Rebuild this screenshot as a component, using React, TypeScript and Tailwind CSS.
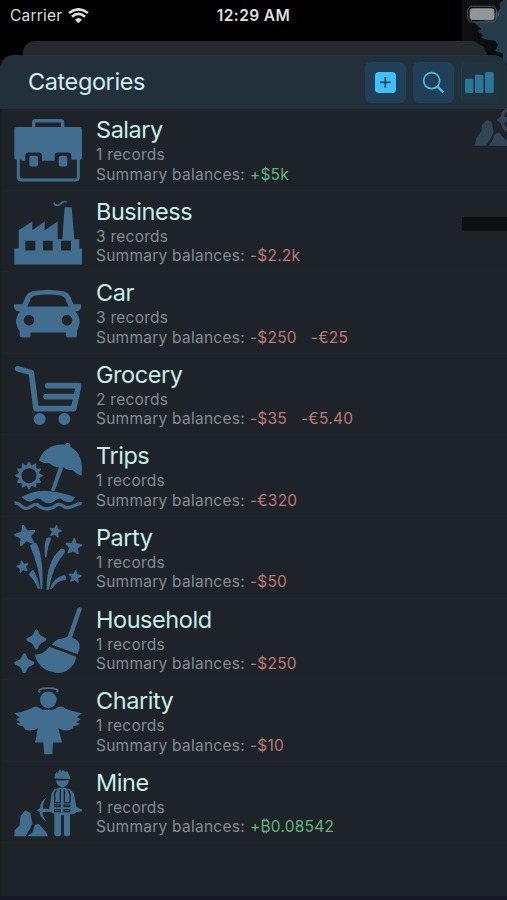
import type { ReactNode } from "react";

type Balance = { label: string; positive?: boolean };

type Category = {
    name: string;
    records: number;
    balances: Balance[];
    viewBox: string;
    icon: ReactNode;
};

const star = "M0 -31Q3 -31 4 -27L9 -13L25 -12Q33 -10 28 -5L15 5L20 21Q21 28 14 25L0 16L-14 25Q-21 28 -20 21L-15 5L-28 -5Q-33 -10 -25 -12L-9 -13L-4 -27Q-3 -31 0 -31Z";
const sparkle = "M0 -30Q4 -30 6 -24Q9 -12 20 -8L28 -4Q33 0 28 4L20 8Q9 12 6 24Q4 30 0 30Q-4 30 -6 24Q-9 12 -20 8L-28 4Q-33 0 -28 -4L-20 -8Q-9 -12 -6 -24Q-4 -30 0 -30Z";

const sunRays = Array.from({ length: 12 }, (_, i) => i * 30);

const categories: Category[] = [
    {
        name: "Salary",
        records: 1,
        balances: [{ label: "+$5k", positive: true }],
        viewBox: "0 1.8 252 244.8",
        icon: (
            <>
                <path d="M101 60V43Q101 37 107 37H182Q188 37 188 43V60" fill="none" stroke="currentColor" strokeWidth="10" />
                <path d="M51 56H239Q246 56 246 63V147Q246 154 239 154H214V142Q214 132 204 132H174Q164 132 164 142V157H126V142Q126 132 116 132H86Q76 132 76 142V157H65V154H51Q43 154 43 147V63Q43 56 51 56Z" />
                <path d="M55 151V206Q55 215 64 215H226Q235 215 235 206V151" fill="none" stroke="currentColor" strokeWidth="9" />
                <rect x="88" y="142" width="26" height="32" rx="6" />
                <rect x="176" y="142" width="26" height="32" rx="6" />
            </>
        ),
    },
    {
        name: "Business",
        records: 3,
        balances: [{ label: "-$2.2k" }],
        viewBox: "0 0.6 252 244.8",
        icon: (
            <>
                <path fillRule="evenodd" d="M43 172H56V118L97 92V118L134 92V118L173 92V145H187L194 49H215L223 145H238V172H246V221H43ZM76 150V179H106V150ZM129 150V179H158V150ZM183 150V179H213V150Z" />
                <path d="M161 36Q169 49 179 41Q190 28 200 34" fill="none" stroke="currentColor" strokeWidth="5" />
            </>
        ),
    },
    {
        name: "Car",
        records: 3,
        balances: [{ label: "-$250" }, { label: "-€25" }],
        viewBox: "0 5.4 252 244.8",
        icon: (
            <path fillRule="evenodd" d="M42 102H67L77 79Q83 67 98 63Q144 54 190 63Q205 67 211 79L220 102H243V109Q243 122 231 123L226 124Q240 140 239 158L231 184V195Q231 202 224 202H206Q198 202 198 195V187H92V195Q92 202 84 202H66Q59 202 59 195V184Q50 171 48 158Q47 140 60 124L55 123Q42 121 42 109ZM82 109H206L195 84Q192 79 185 77Q144 69 103 77Q96 79 93 84ZM87 134A16 16 0 1 0 87 166A16 16 0 1 0 87 134ZM201 134A16 16 0 1 0 201 166A16 16 0 1 0 201 134Z" />
        ),
    },
    {
        name: "Grocery",
        records: 2,
        balances: [{ label: "-$35" }, { label: "-€5.40" }],
        viewBox: "0 4.2 252 244.8",
        icon: (
            <>
                <path d="M53 48L94 60L108 168H221L236 99H143M138 132H224" fill="none" stroke="currentColor" strokeWidth="17" strokeLinecap="round" strokeLinejoin="round" />
                <circle cx="119" cy="199" r="18" />
                <circle cx="193" cy="199" r="18" />
            </>
        ),
    },
    {
        name: "Trips",
        records: 1,
        balances: [{ label: "-€320" }],
        viewBox: "0 3 252 244.8",
        icon: (
            <>
                <path d="M117 80C125 48 159 28 194 32L200 26Q209 25 211 33L211 39C239 53 251 84 244 125Q229 120 216 107Q201 111 191 98L164 170Q158 175 153 168L177 99Q161 101 149 88Q132 89 117 80Z" />
                <path d="M64 189Q94 171 134 170Q180 172 226 190L216 202Q202 209 188 198Q177 189 164 201Q146 215 128 201Q115 188 102 198Q90 207 77 199Z" />
                <path d="M44 207C60 205 62 222 77 223C93 224 98 207 112 212C126 225 142 229 160 220C175 207 181 210 194 219C212 229 226 207 245 209" fill="none" stroke="currentColor" strokeWidth="10" />
                <circle cx="87" cy="125" r="27" fill="none" stroke="currentColor" strokeWidth="9" />
                {sunRays.map((angle) => (
                    <path key={angle} d="M-9 -28L-2 -40Q0 -43 2 -40L9 -28Z" transform={`translate(87 125) rotate(${angle})`} />
                ))}
            </>
        ),
    },
    {
        name: "Party",
        records: 1,
        balances: [{ label: "-$50" }],
        viewBox: "0 1.8 252 244.8",
        icon: (
            <>
                <path d={star} transform="translate(76 58) rotate(-12) scale(1.08)" />
                <path d={star} transform="translate(166 45) rotate(12) scale(.64)" />
                <path d={star} transform="translate(221 91) rotate(5) scale(.84)" />
                <path d={star} transform="translate(68 151) rotate(-12) scale(.62)" />
                <path d={star} transform="translate(225 181) rotate(7) scale(.66)" />
                <path d="M91 86L104 78Q110 79 114 91Q131 134 127 217L122 219Q119 154 91 91Z" />
                <path d="M140 65Q150 59 154 66Q142 92 140 122L135 123Q131 82 140 65Z" />
                <path d="M184 96Q197 98 195 108Q156 151 147 219L140 221Q138 134 184 96Z" />
                <path d="M88 170L99 160Q113 179 120 216L114 217Q107 195 88 177Z" />
                <path d="M193 176Q203 183 196 191Q170 193 156 218L150 217Q160 184 193 176Z" />
            </>
        ),
    },
    {
        name: "Household",
        records: 1,
        balances: [{ label: "-$250" }],
        viewBox: "0 0.6 252 244.8",
        icon: (
            <>
                <path d="M232 29L239 25L246 29L216 117Q241 124 239 145L233 166L156 138Q168 120 185 120L203 114Z" />
                <path d="M148 144L229 174Q225 198 207 210Q184 230 158 219Q138 216 124 202Q109 189 105 168Q131 168 148 144Z" />
                <path d={sparkle} transform="translate(109 122)" />
                <path d={sparkle} transform="translate(73 193)" />
            </>
        ),
    },
    {
        name: "Charity",
        records: 1,
        balances: [{ label: "-$10" }],
        viewBox: "0 -0.6 252 244.8",
        icon: (
            <>
                <path d="M121 36C109 30 122 24 145 24C168 24 181 30 169 36" fill="none" stroke="currentColor" strokeWidth="5" />
                <circle cx="145" cy="59" r="25" />
                <path d="M128 89H161L177 80Q188 76 196 86Q220 95 245 99L231 111L243 117L228 126L240 131Q231 139 221 137Q220 152 192 151L175 144L186 187H159L157 222H133L130 187H105L114 144Q98 155 76 149L68 137Q57 138 49 130L61 126L48 119L59 112L43 99Q70 96 95 84Q105 76 115 81Z" />
            </>
        ),
    },
    {
        name: "Mine",
        records: 1,
        balances: [{ label: "+₿0.08542", positive: true }],
        viewBox: "0 -1.8 252 244.8",
        icon: (
            <>
                <path d="M163 48L165 35L170 27L175 34V26L180 20L185 28L190 22L196 28L202 26L207 35L211 45V49ZM168 54H207Q204 73 187 74Q171 73 168 54Z" />
                <path d="M163 80L183 75H191L210 80L221 92L230 134L246 141V147L230 148L222 154H210V215Q210 221 201 221Q192 221 192 215V158H183V215Q183 221 173 221Q163 221 163 215V154L151 148H128Q128 164 142 180Q119 164 119 148L110 143L120 136Q121 117 139 105Q128 121 129 138L148 139L155 92Z" />
                <path d="M170 82Q162 90 164 103V120H181V80M193 80V120H210V103Q212 90 203 82M164 127H181V132H164ZM192 127H209V132H192ZM164 141H181V147H164ZM192 141H209V147H192Z" fill="none" stroke="#1d2329" strokeWidth="4" />
                <path d="M43 221L44 203L59 188L61 161L76 143L91 151L97 181L92 195L77 221ZM83 221L98 208L105 186L117 184L133 203L139 210L144 221Z" />
            </>
        ),
    },
];

function StatusBar() {
    return (
        <div className="grid h-[41px] grid-cols-3 items-start bg-black px-[10px] pt-[6px] text-[#dedede]">
            <div className="flex items-center gap-[6px]">
                <span className="text-[15.5px] leading-[19px] tracking-[0.2px]">Carrier</span>
                <svg width="21" height="16" viewBox="0 0 63 48" fill="none" stroke="currentColor">
                    <path d="M3 15Q31 -7 60 15" strokeWidth="8" />
                    <path d="M12 26Q31 9 51 26" strokeWidth="8" />
                    <path d="M21 35Q31 25 42 35L31 46Z" fill="currentColor" stroke="none" />
                </svg>
            </div>
            <span className="text-center text-[15.5px] font-semibold leading-[19px] tracking-[0.4px] whitespace-nowrap">12:29 AM</span>
        </div>
    );
}

function Header() {
    return (
        <div className="flex h-[54px] items-center justify-between rounded-t-[14px] bg-[#22303c] pl-[28px]">
            <h1 className="text-[23.5px] leading-[28px] tracking-[-0.4px] text-[#d2eef3]">Categories</h1>
            <div className="flex gap-[7px]">
                <button className="flex h-[41px] w-[41px] items-center justify-center rounded-[6px] bg-[#20405a]">
                    <svg width="21" height="21" viewBox="0 0 63 63">
                        <rect x="0" y="0" width="63" height="63" rx="12" fill="#3fc0fa" />
                        <path d="M31 16V47M15 31H47" stroke="#20435a" strokeWidth="5" />
                    </svg>
                </button>
                <button className="flex h-[41px] w-[41px] items-center justify-center rounded-[6px] bg-[#20405a]">
                    <svg width="23" height="23" viewBox="0 0 69 69" fill="none" stroke="#49bfe9">
                        <circle cx="29" cy="29" r="24" strokeWidth="5" />
                        <path d="M46 46L64 64" strokeWidth="7" />
                    </svg>
                </button>
                <div className="w-[46px]">
                    <button className="flex h-[41px] w-[39px] items-center rounded-[6px] border-l border-[#203d50] bg-[#203440] pl-[3px]">
                        <svg width="29" height="21" viewBox="0 0 87 63" fill="#287799">
                            <rect x="0" y="20" width="25" height="43" rx="4" />
                            <rect x="30" y="8" width="25" height="55" rx="4" />
                            <rect x="60" y="0" width="26" height="63" rx="4" />
                        </svg>
                    </button>
                </div>
            </div>
        </div>
    );
}

function CategoryRow({ category }: { category: Category }) {
    return (
        <li className="flex h-[81.6px] border-b border-[#20272c]">
            <svg className="h-[81.6px] w-[84px] shrink-0 text-[#416e8e]" viewBox={category.viewBox} fill="currentColor">
                {category.icon}
            </svg>
            <div className="pl-[12px] pt-[7px]">
                <h2 className="mb-[2px] text-[23.5px] leading-[27px] tracking-[-0.45px] text-[#c7eee8]">{category.name}</h2>
                <p className="text-[15.5px] leading-[19.5px] tracking-[0.25px] text-[#858b90]">{category.records} records</p>
                <p className="flex text-[15.5px] leading-[19.5px] tracking-[0.25px] whitespace-nowrap text-[#858b90]">
                    <span className="mr-[5px]">Summary balances:</span>
                    {category.balances.map((balance) => (
                        <span key={balance.label} className={balance.positive ? "mr-[14px] text-[#63b57b]" : "mr-[14px] text-[#bc7975]"}>
                            {balance.label}
                        </span>
                    ))}
                </p>
            </div>
        </li>
    );
}

// translucent strip sliding in over the right edge
function SlidingPage() {
    return (
        <svg className="pointer-events-none absolute right-0 top-0" width="45" height="240" viewBox="366 0 135 720">
            <rect x="366" y="0" width="135" height="123" fill="#0d0f12" />
            <path d="M402 67L430 64L455 46L481 27L478 12L490 0H501V192L489 181L487 160L465 153L473 135L465 123L440 119L421 113L430 106L411 92L424 88Z" fill="#263b49" />
            <path d="M403 90L430 116L440 119L465 123L473 135L465 153L487 160L489 168L458 161L438 157L431 140L416 131L402 124Z" fill="#0c0e10" />
            <rect x="383" y="19" width="86" height="47" rx="14" fill="none" stroke="#53575a" strokeWidth="3" />
            <rect x="389" y="25" width="74" height="35" rx="9" fill="#929598" />
            <path d="M473 35Q480 43 473 51Z" fill="#65696d" />
            <path d="M403 437L410 413L424 394L426 376L441 359L455 367L461 394L457 405L439 437ZM446 437L458 421L463 405L476 397L491 414L501 422V437Z" fill="#304656" />
            <path d="M501 323Q485 332 482 350L470 360L482 370Q487 390 501 397V384Q493 377 492 367H501V351H492Q493 340 501 335Z" fill="#304656" />
            <rect x="366" y="651" width="135" height="41" fill="#0e1114" />
        </svg>
    );
}

export default function App() {
    return (
        <main className="relative flex h-[900px] w-[507px] flex-col overflow-hidden bg-black font-[Inter,'Liberation_Sans',sans-serif]">
            <StatusBar />
            <div className="ml-[23px] mr-[20px] h-[28px] shrink-0 rounded-t-[12px] bg-[#262a2f]"></div>
            <section className="relative -mt-[14px] flex flex-1 flex-col rounded-t-[14px] bg-[#1d2329]">
                <Header />
                <ul className="flex-1 border-l-2 border-[#1a1f24] [&>li>svg]:-ml-[2px]">
                    {categories.map((category) => (
                        <CategoryRow key={category.name} category={category} />
                    ))}
                </ul>
                <div className="h-[4px] bg-[#171827]"></div>
            </section>
            <SlidingPage />
        </main>
    );
}
